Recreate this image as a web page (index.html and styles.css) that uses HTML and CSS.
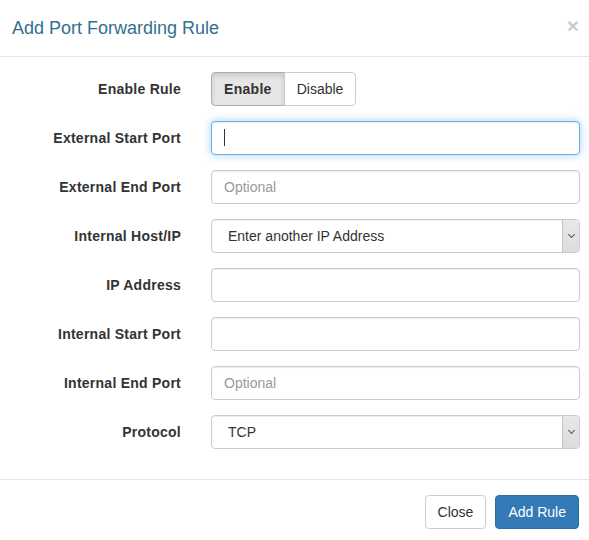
FILE: index.html
```html
<!DOCTYPE html>
<html lang="en">
<head>
    <meta charset="UTF-8">
    <meta name="viewport" content="width=device-width, initial-scale=1.0">
    <title>Add Port Forwarding Rule</title>
    <link rel="stylesheet" href="styles.css">
</head>
<body>
    <div class="modal-content">
        <div class="modal-header">
            <h4 class="modal-title">Add Port Forwarding Rule</h4>
            <button type="button" class="close">&times;</button>
        </div>

        <form class="modal-body">
            <div class="form-group">
                <label>Enable Rule</label>
                <div class="btn-group">
                    <button type="button" class="btn active">Enable</button>
                    <button type="button" class="btn">Disable</button>
                </div>
            </div>

            <div class="form-group">
                <label for="ext-start">External Start Port</label>
                <div class="form-control focused" id="ext-start"><span class="caret-line"></span></div>
            </div>

            <div class="form-group">
                <label for="ext-end">External End Port</label>
                <input type="text" class="form-control" id="ext-end" placeholder="Optional">
            </div>

            <div class="form-group">
                <label for="host">Internal Host/IP</label>
                <div class="select-wrap">
                    <select class="form-control" id="host">
                        <option>Enter another IP Address</option>
                    </select>
                    <span class="select-arrow"></span>
                </div>
            </div>

            <div class="form-group">
                <label for="ip">IP Address</label>
                <input type="text" class="form-control" id="ip">
            </div>

            <div class="form-group">
                <label for="int-start">Internal Start Port</label>
                <input type="text" class="form-control" id="int-start">
            </div>

            <div class="form-group">
                <label for="int-end">Internal End Port</label>
                <input type="text" class="form-control" id="int-end" placeholder="Optional">
            </div>

            <div class="form-group">
                <label for="protocol">Protocol</label>
                <div class="select-wrap">
                    <select class="form-control" id="protocol">
                        <option>TCP</option>
                        <option>UDP</option>
                        <option>Both</option>
                    </select>
                    <span class="select-arrow"></span>
                </div>
            </div>
        </form>

        <div class="modal-footer">
            <button type="button" class="btn">Close</button>
            <button type="button" class="btn btn-primary">Add Rule</button>
        </div>
    </div>
</body>
</html>
```

FILE: styles.css
```css
* {
    box-sizing: border-box;
    margin: 0;
    padding: 0;
}

body {
    background-color: #fff;
    font-family: "Liberation Sans", Arial, sans-serif;
    font-size: 14px;
    line-height: 20px;
    color: #333;
}

.modal-content {
    width: 589px;
    background-color: #fff;
}

.modal-header {
    display: flex;
    justify-content: space-between;
    align-items: flex-start;
    padding: 15px 10px 15px 12px;
    border-bottom: 1px solid #e5e5e5;
}

.modal-title {
    font-size: 18px;
    font-weight: normal;
    line-height: 26px;
    color: #31708f;
}

.close {
    background: none;
    border: none;
    font-family: "Liberation Sans", Arial, sans-serif;
    font-size: 21px;
    font-weight: bold;
    line-height: 1;
    color: #000;
    opacity: 0.2;
    margin-top: 0;
    cursor: pointer;
}

.modal-body {
    padding: 15px 9px 15px 11px;
}

.form-group {
    display: grid;
    grid-template-columns: 170px 1fr;
    column-gap: 30px;
    margin-bottom: 15px;
}

.form-group label {
    text-align: right;
    font-weight: bold;
    letter-spacing: 0.25px;
    padding-top: 7px;
    line-height: 20px;
}

.btn-group {
    display: flex;
}

.btn {
    display: inline-block;
    height: 34px;
    padding: 6px 12px;
    font-family: "Liberation Sans", Arial, sans-serif;
    font-size: 14px;
    line-height: 20px;
    color: #333;
    background-color: #fff;
    border: 1px solid #ccc;
    border-radius: 4px;
    cursor: pointer;
}

.btn-group .btn:first-child {
    border-top-right-radius: 0;
    border-bottom-right-radius: 0;
}

.btn-group .btn:last-child {
    border-top-left-radius: 0;
    border-bottom-left-radius: 0;
    margin-left: -1px;
}

.btn.active {
    font-weight: bold;
    letter-spacing: 0.3px;
    background-color: #e6e6e6;
    border-color: #adadad;
    box-shadow: inset 0 3px 5px rgba(0, 0, 0, 0.125);
}

.btn-primary {
    color: #fff;
    background-color: #337ab7;
    border-color: #2e6da4;
}

.form-control {
    display: block;
    width: 100%;
    height: 34px;
    padding: 6px 12px;
    font-family: "Liberation Sans", Arial, sans-serif;
    font-size: 14px;
    line-height: 20px;
    color: #333;
    background-color: #fff;
    border: 1px solid #ccc;
    border-radius: 4px;
    box-shadow: inset 0 1px 1px rgba(0, 0, 0, 0.075);
}

.form-control::placeholder {
    color: #999;
}

.form-control.focused {
    border-color: #66afe9;
    box-shadow: inset 0 1px 1px rgba(0, 0, 0, 0.075), 0 0 8px rgba(102, 175, 233, 0.6);
}

.caret-line {
    display: inline-block;
    width: 1px;
    height: 17px;
    margin-top: 1px;
    vertical-align: top;
    background-color: #333;
}

.select-wrap {
    position: relative;
}

select.form-control {
    appearance: none;
    -webkit-appearance: none;
    padding-left: 16px;
}

/* native-looking dropdown button on the right side of the select */
.select-arrow {
    position: absolute;
    top: 1px;
    right: 1px;
    width: 17px;
    height: 32px;
    background: linear-gradient(#e8e8e8, #dcdcdc);
    border-left: 1px solid #c4c4c4;
    border-radius: 0 3px 3px 0;
    pointer-events: none;
}

.select-arrow::after {
    content: "";
    position: absolute;
    left: 6px;
    top: 12px;
    width: 4px;
    height: 4px;
    border-right: 1px solid #555;
    border-bottom: 1px solid #555;
    transform: rotate(45deg);
}

.modal-footer {
    display: flex;
    justify-content: flex-end;
    gap: 9px;
    padding: 15px 10px 15px 15px;
    border-top: 1px solid #e5e5e5;
}
```
